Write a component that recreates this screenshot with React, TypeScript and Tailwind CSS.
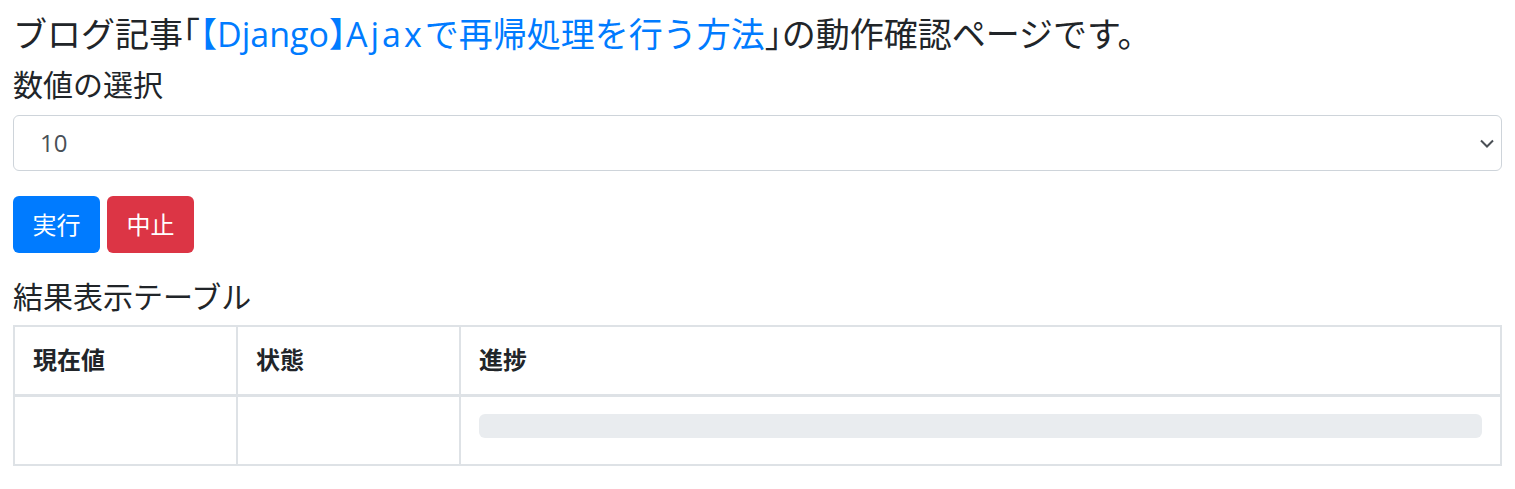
import React from 'react';

const font = { fontFamily: '"Open Sans", "Noto Sans CJK JP", sans-serif' };

// half-width punctuation, as the reference renders brackets narrow
const Br: React.FC<{ c: string }> = ({ c }) => (
  <span className="[font-feature-settings:'halt']">{c}</span>
);

const App: React.FC = () => {
  return (
    <div className="min-h-screen bg-white px-[13px] pt-[14px] text-[#212529]" style={font}>
      <h1 className="text-[34px] font-normal leading-[40px] whitespace-nowrap">
        ブログ記事<Br c="「" />
        <a href="#" className="text-[#007bff]">
          <Br c="【" />Django<Br c="】" />
          <span className="tracking-[3px]">Ajax</span>で再帰処理を行う方法
        </a>
        <Br c="」" />の動作確認ページです。
      </h1>

      <div className="mt-[13px] text-[30px] leading-[36px]">数値の選択</div>

      <div className="mt-[12px] flex h-[56px] items-center justify-between rounded-[6px] border border-[#ced4da] pl-[26px] pr-[7px] text-[24px] text-[#495057]">
        <span>10</span>
        <svg width="14" height="9" viewBox="0 0 14 9" fill="none">
          <path d="M1 1.5l6 6 6-6" stroke="#4a4f55" strokeWidth="2" />
        </svg>
      </div>

      <div className="mt-[25px] flex gap-[7px]">
        <button className="h-[57px] w-[87px] rounded-[6px] bg-[#007bff] text-[24px] text-white">実行</button>
        <button className="h-[57px] w-[87px] rounded-[6px] bg-[#dc3545] text-[24px] text-white">中止</button>
      </div>

      <div className="mt-[26px] text-[30px] leading-[36px]">結果表示テーブル</div>

      <table className="mt-[10px] w-full table-fixed border-collapse">
        <colgroup>
          <col className="w-[15%]" />
          <col className="w-[15%]" />
          <col className="w-[70%]" />
        </colgroup>
        <thead>
          <tr className="h-[69px]">
            {['現在値', '状態', '進捗'].map((h) => (
              <th
                key={h}
                className="border-2 border-b-[3px] border-[#dee2e6] px-[18px] text-left text-[24px] font-bold"
              >
                {h}
              </th>
            ))}
          </tr>
        </thead>
        <tbody>
          <tr className="h-[70px]">
            <td className="border-2 border-[#dee2e6]" />
            <td className="border-2 border-[#dee2e6]" />
            <td className="border-2 border-[#dee2e6] px-[18px] pt-[17px] align-top">
              <div className="h-[24px] w-full rounded-[6px] bg-[#e9ecef]" />
            </td>
          </tr>
        </tbody>
      </table>
    </div>
  );
};

export default App;
